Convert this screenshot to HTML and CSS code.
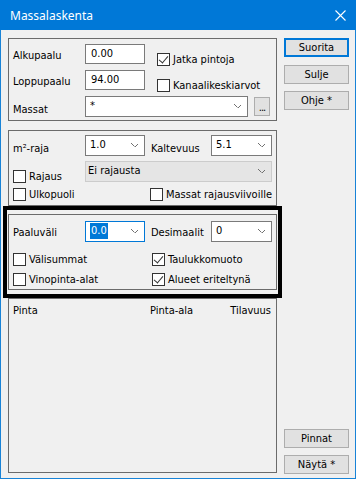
FILE: index.html
```html
<!DOCTYPE html>
<html lang="fi">
<head>
    <meta charset="UTF-8">
    <title>Massalaskenta</title>
    <link rel="stylesheet" href="styles.css">
</head>
<body>
    <div class="window">
        <!-- Title bar -->
        <div class="titlebar">
            <span class="title">Massalaskenta</span>
            <svg class="close" width="11" height="11" viewBox="0 0 11 11">
                <path d="M0.5 0.5 L10.5 10.5 M10.5 0.5 L0.5 10.5" stroke="#fff" stroke-width="1.1" fill="none"/>
            </svg>
        </div>

        <div class="content">
            <div class="main">
                <!-- Paalut ja massat -->
                <div class="panel p1">
                    <div class="row">
                        <span class="lbl">Alkupaalu</span>
                        <div class="edit">0.00</div>
                        <label class="chk gap12 top8"><span class="box on"></span>Jatka pintoja</label>
                    </div>
                    <div class="row">
                        <span class="lbl">Loppupaalu</span>
                        <div class="edit">94.00</div>
                        <label class="chk gap12 top8"><span class="box"></span>Kanaalikeskiarvot</label>
                    </div>
                    <div class="row tall">
                        <span class="lbl top7">Massat</span>
                        <div class="combo wide">*<span class="arrow"></span></div>
                        <div class="dots">...</div>
                    </div>
                </div>

                <!-- Rajaus -->
                <div class="panel p2">
                    <div class="row tall">
                        <span class="lbl top7">m²-raja</span>
                        <div class="combo">1.0<span class="arrow"></span></div>
                        <span class="lbl2 top7">Kaltevuus</span>
                        <div class="combo w61">5.1<span class="arrow"></span></div>
                    </div>
                    <div class="row tall">
                        <label class="chk cell72 top8"><span class="box"></span>Rajaus</label>
                        <div class="combo off w187">Ei rajausta<span class="arrow"></span></div>
                    </div>
                    <div class="row short">
                        <label class="chk cell139"><span class="box"></span>Ulkopuoli</label>
                        <label class="chk"><span class="box"></span>Massat rajausviivoille</label>
                    </div>
                </div>

                <!-- Tulostus (korostettu) -->
                <div class="highlight">
                    <div class="panel p3">
                        <div class="row tall gap10">
                            <span class="lbl top5">Paaluväli</span>
                            <div class="combo focus"><span class="sel">0.0</span><span class="arrow"></span></div>
                            <span class="lbl2 top5">Desimaalit</span>
                            <div class="combo w61">0<span class="arrow"></span></div>
                        </div>
                        <div class="row short">
                            <label class="chk cell139"><span class="box"></span>Välisummat</label>
                            <label class="chk"><span class="box on"></span>Taulukkomuoto</label>
                        </div>
                        <div class="row short">
                            <label class="chk cell139"><span class="box"></span>Vinopinta-alat</label>
                            <label class="chk"><span class="box on"></span>Alueet eriteltynä</label>
                        </div>
                    </div>
                </div>

                <!-- Tulokset -->
                <div class="panel results">
                    <div class="head">
                        <span class="col1">Pinta</span>
                        <span>Pinta-ala</span>
                        <span class="col3">Tilavuus</span>
                    </div>
                </div>
            </div>

            <div class="side">
                <div class="btns">
                    <button class="default">Suorita</button>
                    <button>Sulje</button>
                    <button class="last">Ohje *</button>
                </div>
                <div class="btns">
                    <button>Pinnat</button>
                    <button>Näytä *</button>
                </div>
            </div>
        </div>
    </div>
</body>
</html>
```

FILE: styles.css
```css
/* Page and window frame */
body {
    margin: 0;
    background: #ffffff;
}

.window {
    width: 356px;
    height: 479px;
    box-sizing: border-box;
    border: 1px solid #1883d7;
    border-top: none;
    background: #f0f0f0;
    display: flex;
    flex-direction: column;
    font-family: "DejaVu Sans Condensed", "DejaVu Sans", sans-serif;
    font-stretch: condensed;
    font-size: 11px;
    line-height: 13px;
    color: #000;
}

/* Title bar */
.titlebar {
    height: 30px;
    margin: 0 -1px;
    flex-shrink: 0;
    background: #0078d7;
    display: flex;
    align-items: center;
    padding-left: 10px;
    color: #fff;
}

.title {
    font-family: "Noto Sans", sans-serif;
    font-stretch: normal;
    font-size: 12px;
}

.close {
    margin-left: auto;
    margin-right: 10px;
}

/* Main area */
.content {
    flex: 1;
    display: flex;
    padding: 8px 5px 5px 7px;
    min-height: 0;
}

.main {
    width: 269px;
    display: flex;
    flex-direction: column;
}

.side {
    width: 65px;
    margin-left: 7px;
    margin-bottom: -1px;
    display: flex;
    flex-direction: column;
    justify-content: space-between;
}

/* Group boxes */
.panel {
    border: 1px solid #6b6b6b;
    padding: 0 4px;
}

.p1 { padding-top: 5px; padding-bottom: 3px; }
.p2 { margin-top: 9px; padding-top: 4px; padding-bottom: 3px; }
.p3 { padding-top: 6px; padding-bottom: 2px; }

.highlight {
    margin: 0 -5px;
    border: 4px solid #000;
    padding: 4px 1px;
}

.results {
    flex: 1;
    padding: 5px 5px 0 4px;
}

/* Rows */
.row {
    display: flex;
    align-items: flex-start;
    height: 20px;
    margin-bottom: 6px;
}

.row.tall { height: 21px; margin-bottom: 5px; }
.row.short { height: 15px; margin-bottom: 5px; }
.row.gap10 { margin-bottom: 10px; }
.row:last-child { margin-bottom: 0; }

.lbl {
    width: 72px;
    margin-top: 5px;
    white-space: nowrap;
}

.lbl2 {
    width: 60px;
    margin-left: 6px;
    white-space: nowrap;
}

.top5 { margin-top: 5px; }
.top7 { margin-top: 7px; }
.top8 { margin-top: 8px; }
.gap12 { margin-left: 12px; }
.cell72 { width: 72px; }
.cell139 { width: 139px; }

/* Edit fields and combos */
.edit,
.combo {
    box-sizing: border-box;
    width: 60px;
    height: 20px;
    border: 1px solid #7a7a7a;
    background: #fff;
    padding-left: 5px;
    line-height: 18px;
    white-space: nowrap;
}

.combo {
    position: relative;
    height: 21px;
    line-height: 17px;
    padding-left: 4px;
}

.combo.wide { width: 163px; }
.combo.w61 { width: 61px; }
.combo.w187 { width: 187px; }

.combo.off {
    background: #e5e5e5;
    border-color: #cccccc;
    padding-left: 2px;
}

.combo.focus {
    border-color: #0078d7;
}

.sel {
    background: #0078d7;
    color: #fff;
    display: inline-block;
    padding: 0 1px;
    line-height: 16px;
    margin-top: 1px;
}

/* small chevron in combos */
.arrow {
    position: absolute;
    right: 6px;
    top: 7px;
    width: 7px;
    height: 4px;
    background:
        linear-gradient(to top right, transparent 42%, #707070 42%, #707070 58%, transparent 58%) left / 50% 100% no-repeat,
        linear-gradient(to top left, transparent 42%, #707070 42%, #707070 58%, transparent 58%) right / 50% 100% no-repeat;
}

.dots {
    box-sizing: border-box;
    width: 16px;
    height: 19px;
    margin: 1px 0 0 6px;
    background: #e1e1e1;
    border: 1px solid #adadad;
    text-align: center;
    line-height: 20px;
    letter-spacing: -1px;
}

/* Checkboxes */
.chk {
    display: flex;
    align-items: center;
    height: 15px;
    white-space: nowrap;
}

.box {
    box-sizing: border-box;
    width: 13px;
    height: 13px;
    border: 1px solid #333;
    background: #fff;
    margin-right: 3px;
    position: relative;
}

.box.on::after {
    content: "";
    position: absolute;
    left: 3px;
    top: 0;
    width: 4px;
    height: 8px;
    border-right: 1px solid #333;
    border-bottom: 1px solid #333;
    transform: rotate(40deg);
}

/* Results list header */
.head {
    display: flex;
}

.col1 { width: 137px; }
.col3 { margin-left: auto; }

/* Side buttons */
.btns {
    display: flex;
    flex-direction: column;
}

button {
    box-sizing: border-box;
    width: 65px;
    height: 19px;
    margin: 0 0 7px;
    padding: 0;
    background: #e1e1e1;
    border: 1px solid #adadad;
    font-family: inherit;
    font-stretch: condensed;
    font-size: 11px;
    color: #000;
}

button:last-child { margin-bottom: 0; }

button.default {
    border-color: #0078d7;
    box-shadow: inset 0 0 0 1px #0078d7;
    margin-bottom: 8px;
}
```
